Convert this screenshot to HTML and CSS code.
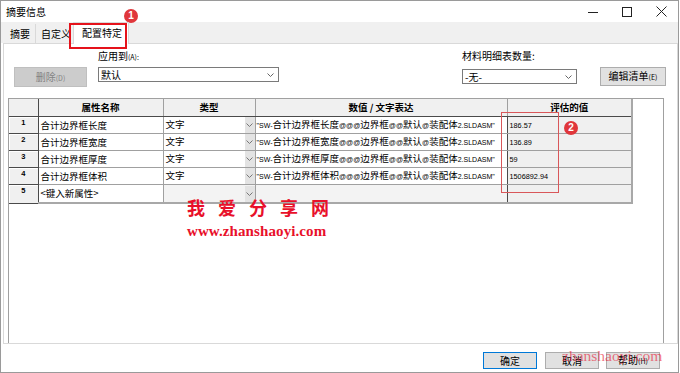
FILE: index.html
```html
<!DOCTYPE html>
<html lang="zh-CN">
<head>
    <meta charset="UTF-8">
    <meta name="viewport" content="width=device-width, initial-scale=1.0">
    <title>摘要信息</title>
    <link rel="stylesheet" href="styles.css">
</head>
<body>
    <div class="window">
        <div class="titlebar">
            <span class="title">摘要信息</span>
            <div class="win-buttons">
                <span class="win-btn"><svg width="10" height="10" viewBox="0 0 10 10"><path d="M0 5.5h10" stroke="#222" stroke-width="1"/></svg></span>
                <span class="win-btn"><svg width="10" height="10" viewBox="0 0 10 10"><rect x="0.5" y="0.5" width="9" height="9" fill="none" stroke="#222"/></svg></span>
                <span class="win-btn"><svg width="11" height="11" viewBox="0 0 11 11"><path d="M0.5 0.5L10.5 10.5M10.5 0.5L0.5 10.5" stroke="#222" stroke-width="1"/></svg></span>
            </div>
        </div>

        <div class="tabs">
            <span class="tab first">摘要</span>
            <span class="tab">自定义</span>
            <span class="tab active">配置特定</span>
        </div>

        <div class="page">
            <div class="toolbar">
                <div class="field del-field">
                    <button class="btn disabled">删除<small>(D)</small></button>
                </div>
                <div class="field apply-field">
                    <label>应用到<small>(A):</small></label>
                    <div class="select wide"><span>默认</span><svg width="7" height="4" viewBox="0 0 7 4"><path d="M0.5 0.5L3.5 3.5L6.5 0.5" fill="none" stroke="#666"/></svg></div>
                </div>
                <div class="field bom-field">
                    <label>材料明细表数量:</label>
                    <div class="select narrow"><span>-无-</span><svg width="7" height="4" viewBox="0 0 7 4"><path d="M0.5 0.5L3.5 3.5L6.5 0.5" fill="none" stroke="#666"/></svg></div>
                </div>
                <div class="field edit-field">
                    <button class="btn">编辑清单<small>(E)</small></button>
                </div>
            </div>

            <div class="grid-box">
                <table class="props">
                    <colgroup>
                        <col class="c-num">
                        <col class="c-name">
                        <col class="c-type">
                        <col class="c-value">
                        <col class="c-eval">
                    </colgroup>
                    <thead>
                        <tr>
                            <th class="corner"></th>
                            <th>属性名称</th>
                            <th>类型</th>
                            <th>数值 / 文字表达</th>
                            <th>评估的值</th>
                        </tr>
                    </thead>
                    <tbody>
                        <tr>
                            <td class="num">1</td>
                            <td>合计边界框长度</td>
                            <td class="type"><div class="type-cell"><span>文字</span><span class="drop"><svg width="7" height="4" viewBox="0 0 7 4"><path d="M0.5 0.5L3.5 3.5L6.5 0.5" fill="none" stroke="#777"/></svg></span></div></td>
                            <td class="value"><span class="lat">"SW-</span>合计边界框长度<span class="lat">@@@</span>边界框<span class="lat">@@</span>默认<span class="lat">@</span>装配体<span class="lat">2.SLDASM"</span></td>
                            <td class="eval">186.57</td>
                        </tr>
                        <tr>
                            <td class="num">2</td>
                            <td>合计边界框宽度</td>
                            <td class="type"><div class="type-cell"><span>文字</span><span class="drop"><svg width="7" height="4" viewBox="0 0 7 4"><path d="M0.5 0.5L3.5 3.5L6.5 0.5" fill="none" stroke="#777"/></svg></span></div></td>
                            <td class="value"><span class="lat">"SW-</span>合计边界框宽度<span class="lat">@@@</span>边界框<span class="lat">@@</span>默认<span class="lat">@</span>装配体<span class="lat">2.SLDASM"</span></td>
                            <td class="eval">136.89</td>
                        </tr>
                        <tr>
                            <td class="num">3</td>
                            <td>合计边界框厚度</td>
                            <td class="type"><div class="type-cell"><span>文字</span><span class="drop"><svg width="7" height="4" viewBox="0 0 7 4"><path d="M0.5 0.5L3.5 3.5L6.5 0.5" fill="none" stroke="#777"/></svg></span></div></td>
                            <td class="value"><span class="lat">"SW-</span>合计边界框厚度<span class="lat">@@@</span>边界框<span class="lat">@@</span>默认<span class="lat">@</span>装配体<span class="lat">2.SLDASM"</span></td>
                            <td class="eval">59</td>
                        </tr>
                        <tr>
                            <td class="num">4</td>
                            <td>合计边界框体积</td>
                            <td class="type"><div class="type-cell"><span>文字</span><span class="drop"><svg width="7" height="4" viewBox="0 0 7 4"><path d="M0.5 0.5L3.5 3.5L6.5 0.5" fill="none" stroke="#777"/></svg></span></div></td>
                            <td class="value"><span class="lat">"SW-</span>合计边界框体积<span class="lat">@@@</span>边界框<span class="lat">@@</span>默认<span class="lat">@</span>装配体<span class="lat">2.SLDASM"</span></td>
                            <td class="eval">1506892.94</td>
                        </tr>
                        <tr class="new-row">
                            <td class="num">5</td>
                            <td class="new-name">&lt;键入新属性&gt;</td>
                            <td class="type"><div class="type-cell"><span></span><span class="drop"><svg width="7" height="4" viewBox="0 0 7 4"><path d="M0.5 0.5L3.5 3.5L6.5 0.5" fill="none" stroke="#777"/></svg></span></div></td>
                            <td class="value"></td>
                            <td class="eval"></td>
                        </tr>
                    </tbody>
                </table>
            </div>
        </div>

        <div class="footer">
            <button class="btn default">确定</button>
            <button class="btn">取消</button>
            <button class="btn">帮助<small>(H)</small></button>
        </div>

        <!-- annotations drawn over the dialog -->
        <div class="mark-box tab-mark"></div>
        <div class="badge badge-1">1</div>
        <div class="mark-box value-mark"></div>
        <div class="badge badge-2">2</div>
        <div class="watermark">
            <div class="wm-title">我爱分享网</div>
            <div class="wm-url">www.zhanshaoyi.com</div>
        </div>
        <div class="wm-corner">zhanshaoyi.com</div>
    </div>
</body>
</html>
```

FILE: styles.css
```css
body {
    margin: 0;
    background: #fff;
    font-family: "Noto Sans CJK SC", "Microsoft YaHei", sans-serif;
    font-size: 10px;
    color: #000;
}
.window {
    position: relative;
    width: 679px;
    height: 373px;
    box-sizing: border-box;
    border: 1px solid #9a9a9a;
    background: #fff;
    overflow: hidden;
}

/* title bar */
.titlebar {
    height: 21px;
    display: flex;
    align-items: center;
    justify-content: space-between;
}
.title {
    margin-left: 5px;
    font-size: 10px;
    line-height: 12px;
}
.win-buttons {
    display: flex;
}
.win-btn {
    width: 34px;
    height: 21px;
    display: flex;
    align-items: center;
    justify-content: center;
}

/* tabs */
.tabs {
    height: 21px;
    background: #f0f0f0;
    display: flex;
    align-items: flex-end;
}
.tab {
    height: 19px;
    line-height: 19px;
    padding: 0 5px;
    border-right: 1px solid #d9d9d9;
    box-sizing: border-box;
}
.tab.first {
    margin-left: 4px;
}
.tab.active {
    position: relative;
    z-index: 2;
    height: 22px;
    line-height: 20px;
    margin-left: -4px;
    margin-bottom: -1px;
    padding: 0 6px 0 8px;
    background: #fff;
    border: 1px solid #d9d9d9;
    border-bottom: none;
}

/* tab page */
.page {
    margin-left: 2px;
    width: 675px;
    height: 301px;
    box-sizing: border-box;
    border: 1px solid #d9d9d9;
    background: #fff;
}
.toolbar {
    height: 54px;
    box-sizing: border-box;
    padding-top: 6px;
    display: flex;
    align-items: flex-start;
}
.field label {
    display: block;
    height: 12px;
    line-height: 12px;
}
.field small {
    font-size: 7px;
}
.del-field {
    margin-left: 10px;
    padding-top: 17px;
}
.apply-field {
    margin-left: 11px;
}
.bom-field {
    margin-left: 183px;
}
.edit-field {
    margin-left: 23px;
    padding-top: 17px;
}
.select {
    height: 15px;
    box-sizing: border-box;
    border: 1px solid #7a7a7a;
    background: #fff;
    display: flex;
    align-items: center;
    justify-content: space-between;
    padding: 0 4px 0 2px;
    line-height: 13px;
}
.select.wide {
    width: 181px;
    margin-top: 5px;
}
.select.narrow {
    width: 115px;
    margin-top: 7px;
}

/* buttons */
.btn {
    font-family: inherit;
    font-size: 10px;
    height: 19px;
    line-height: 15px;
    padding: 0;
    background: #e1e1e1;
    border: 1px solid #adadad;
    color: #000;
}
.btn small {
    font-size: 7px;
}
.btn.disabled {
    width: 73px;
    height: 20px;
    background: #cccccc;
    border-color: #bfbfbf;
    color: #838383;
}
.edit-field .btn {
    width: 66px;
}

/* property grid */
.grid-box {
    margin-left: 4px;
    width: 656px;
    height: 245px;
    box-sizing: border-box;
    border: 1px solid #a0a0a0;
    border-bottom: none;
    background: #fff;
}
.props {
    border-collapse: collapse;
    table-layout: fixed;
    width: 623px;
    font-size: 9.5px;
}
.c-num { width: 29px; }
.c-name { width: 125px; }
.c-type { width: 92px; }
.c-value { width: 252px; }
.c-eval { width: 125px; }
.props th,
.props td {
    height: 16px;
    padding: 0 2px;
    line-height: 15px;
    border: 1px solid #a0a0a0;
    white-space: nowrap;
    overflow: hidden;
    text-align: left;
}
.props th {
    height: 17px;
    background: #f0f0f0;
    font-weight: bold;
    text-align: center;
    border-top: none;
    border-bottom: 1px solid #4a4a4a;
}
.props th.corner {
    border-left: none;
    border-right: 1px solid #4a4a4a;
}
.props th:last-child,
.props td:last-child {
    border-right: 2px solid #a8a8a8;
}
.props td.num {
    background: #f0f0f0;
    font-family: "Liberation Sans", sans-serif;
    font-weight: bold;
    font-size: 7.5px;
    text-align: center;
    vertical-align: top;
    line-height: 12px;
    border-left: none;
    border-right: 1px solid #4a4a4a;
    border-bottom: 1px solid #4a4a4a;
    box-shadow: inset 1px 1px 0 #fff;
}
.props td.type {
    padding: 0 0 0 2px;
}
.type-cell {
    display: flex;
    justify-content: space-between;
    height: 16px;
}
.drop {
    width: 10px;
    background: #e3e3e3;
    display: flex;
    align-items: center;
    justify-content: center;
}
.props td.value {
    padding-left: 1px;
    border-right: 1px solid #4a4a4a;
}
.lat {
    font-family: "Liberation Sans", sans-serif;
    font-size: 7px;
}
.props td.eval {
    background: #f0f0f0;
    font-family: "Liberation Sans", sans-serif;
    font-size: 7.3px;
}
.new-row td {
    height: 17px;
    border-bottom: 2px solid #a8a8a8;
}
.new-row td.type,
.new-row td.value {
    background: #f3f3f3;
}

/* footer */
.footer {
    display: flex;
    justify-content: flex-end;
    gap: 7px;
    padding: 8px 18px 0 0;
}
.footer .btn {
    width: 54px;
    height: 17px;
    line-height: 13px;
}
.footer .btn.default {
    border-color: #0078d7;
    margin-right: 1px;
}

/* annotations */
.mark-box {
    position: absolute;
    box-sizing: border-box;
}
.tab-mark {
    left: 68px;
    top: 22px;
    width: 58px;
    height: 26px;
    border: 2px solid #e5121b;
    z-index: 3;
}
.value-mark {
    left: 500px;
    top: 111px;
    width: 58px;
    height: 81px;
    border: 1px solid #d9575a;
}
.badge {
    position: absolute;
    width: 14px;
    height: 14px;
    border-radius: 50%;
    background: #e0363b;
    color: #fff;
    font-family: "Liberation Sans", sans-serif;
    font-weight: bold;
    font-size: 10px;
    line-height: 14px;
    text-align: center;
}
.badge-1 {
    left: 123px;
    top: 8px;
}
.badge-2 {
    left: 563px;
    top: 120px;
}
.watermark {
    position: absolute;
    left: 186px;
    top: 195px;
    color: #e8102a;
    font-weight: bold;
}
.wm-title {
    font-size: 18px;
    line-height: 22px;
    letter-spacing: 13px;
}
.wm-url {
    margin-top: 5px;
    font-family: "Liberation Serif", serif;
    font-size: 15px;
    line-height: 16px;
    letter-spacing: 0.1px;
}
.wm-corner {
    position: absolute;
    left: 561px;
    top: 345px;
    color: rgba(232, 20, 50, 0.6);
    font-family: "Liberation Serif", serif;
    font-size: 15.5px;
    line-height: 20px;
}
```
